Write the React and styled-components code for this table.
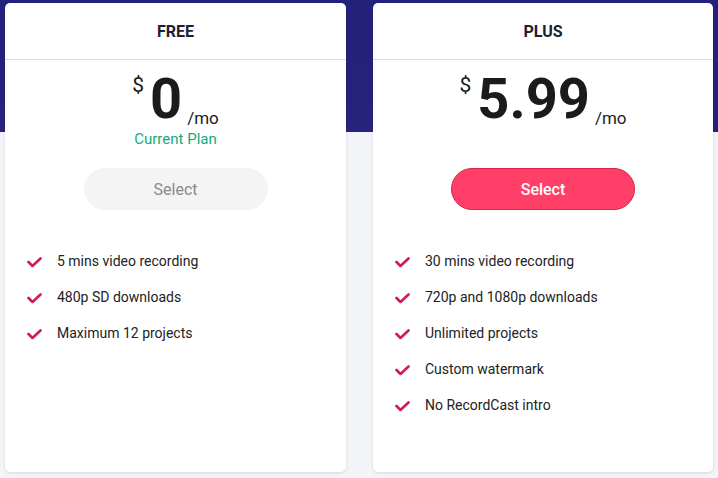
import React from 'react';
import styled, { createGlobalStyle } from 'styled-components';

const GlobalStyle = createGlobalStyle`
  html, body {
    margin: 0;
    padding: 0;
  }
  body {
    font-family: Roboto, "Liberation Sans", sans-serif;
    background: #f3f4f7;
  }
`;

const plans = [
  {
    name: 'FREE',
    amount: '0',
    current: true,
    features: ['5 mins video recording', '480p SD downloads', 'Maximum 12 projects'],
  },
  {
    name: 'PLUS',
    amount: '5.99',
    current: false,
    features: [
      '30 mins video recording',
      '720p and 1080p downloads',
      'Unlimited projects',
      'Custom watermark',
      'No RecordCast intro',
    ],
  },
];

const Check = () => (
  <svg width="15" height="11" viewBox="0 0 15 11">
    <polyline
      points="1.5,5 5.5,9 13.5,1.5"
      fill="none"
      stroke="#d41a5c"
      strokeWidth="2.6"
      strokeLinecap="round"
      strokeLinejoin="round"
    />
  </svg>
);

const App = () => (
  <Page>
    <GlobalStyle />
    <Cards>
      {plans.map(plan => (
        <Card key={plan.name}>
          <CardHeader>{plan.name}</CardHeader>
          <PriceBlock>
            <PriceRow>
              <Currency>$</Currency>
              <Amount>{plan.amount}</Amount>
              <Period>/mo</Period>
            </PriceRow>
            {plan.current && <CurrentPlan>Current Plan</CurrentPlan>}
          </PriceBlock>
          <SelectButton primary={!plan.current}>Select</SelectButton>
          <Features>
            {plan.features.map(f => (
              <Feature key={f}>
                <Check />
                <span>{f}</span>
              </Feature>
            ))}
          </Features>
        </Card>
      ))}
    </Cards>
  </Page>
);

const Page = styled.div`
  width: 718px;
  height: 478px;
  overflow: hidden;
  background: linear-gradient(to bottom, #23217a 0, #26237d 132px, #f3f4f7 132px);
`;

const Cards = styled.div`
  display: grid;
  grid-template-columns: 341px 340px;
  gap: 27px;
  padding: 3px 0 0 5px;
`;

const Card = styled.div`
  height: 469px;
  background: #fff;
  border-radius: 5px;
  box-shadow: 0 1px 3px rgba(20, 20, 60, 0.12);
  display: flex;
  flex-direction: column;
`;

const CardHeader = styled.div`
  height: 56px;
  border-bottom: 1px solid #dcdde2;
  display: flex;
  align-items: center;
  justify-content: center;
  font-size: 16px;
  font-weight: 700;
  color: #1c2130;
`;

const PriceBlock = styled.div`
  height: 108px;
  padding-top: 11px;
  box-sizing: border-box;
  display: flex;
  flex-direction: column;
  align-items: center;
`;

const PriceRow = styled.div`
  display: flex;
  align-items: flex-start;
  height: 56px;
  color: #1b1b1b;
`;

const Currency = styled.span`
  font-size: 21px;
  line-height: 21px;
  margin-top: 4px;
  margin-right: 6px;
`;

const Amount = styled.span`
  font-size: 56px;
  line-height: 56px;
  font-weight: 700;
`;

const Period = styled.span`
  font-size: 17px;
  line-height: 17px;
  margin-top: 39px;
  margin-left: 5px;
`;

const CurrentPlan = styled.div`
  margin-top: 3px;
  font-size: 15px;
  line-height: 18px;
  color: #1aa97b;
`;

const SelectButton = styled.button`
  align-self: center;
  width: 184px;
  height: 42px;
  border-radius: 21px;
  font-family: inherit;
  font-size: 16px;
  cursor: pointer;
  border: 1px solid ${props => (props.primary ? '#d8244f' : '#f4f4f4')};
  background: ${props => (props.primary ? '#ff3f68' : '#f4f4f4')};
  color: ${props => (props.primary ? '#fff' : '#8a8a8a')};
  font-weight: ${props => (props.primary ? 500 : 400)};
`;

const Features = styled.ul`
  list-style: none;
  margin: 33px 0 0;
  padding: 0 0 0 22px;
`;

const Feature = styled.li`
  display: flex;
  align-items: center;
  gap: 15px;
  height: 36px;
  font-size: 14px;
  color: #222;

  svg {
    flex: none;
    margin-top: 2px;
  }
`;

export default App;
